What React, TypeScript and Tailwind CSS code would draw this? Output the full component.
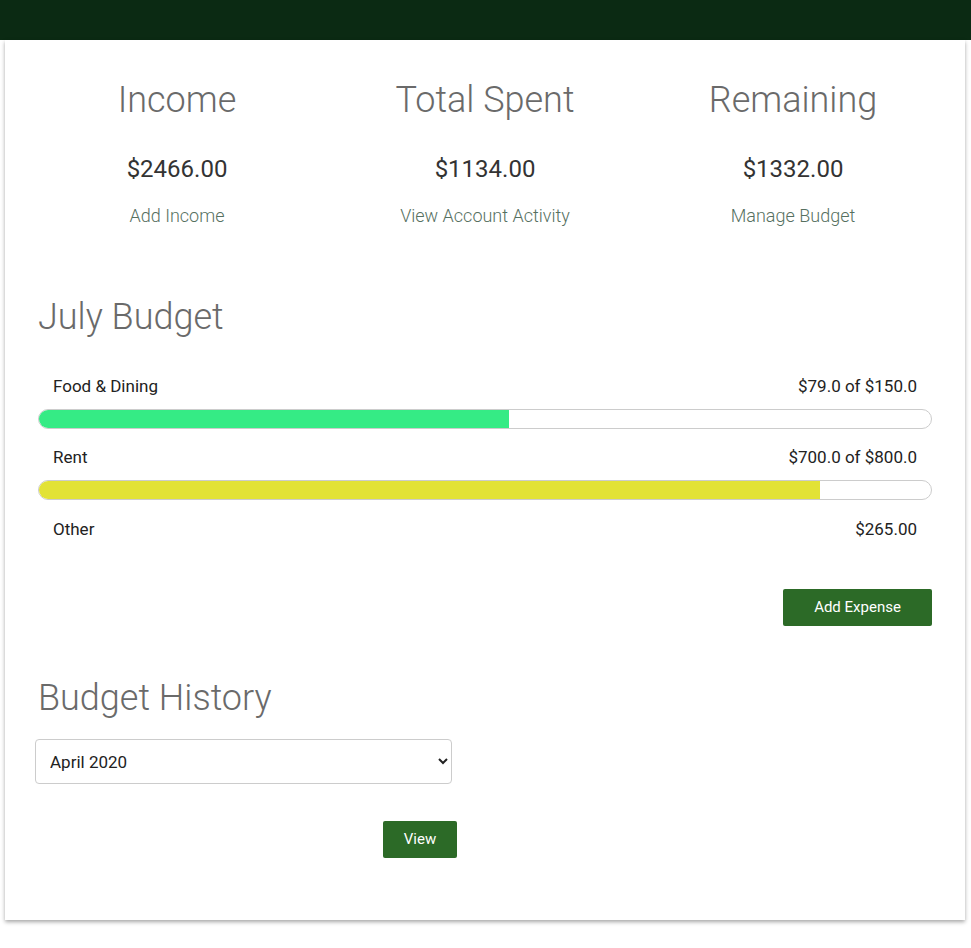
import { useState } from "react";

const categories = [
  { label: "Food & Dining", spent: 79, budget: 150, color: "bg-[#35eb85]" },
  { label: "Rent", spent: 700, budget: 800, color: "bg-[#e2e236]" },
];

const summary = [
  { title: "Income", amount: "$2466.00", link: "Add Income" },
  { title: "Total Spent", amount: "$1134.00", link: "View Account Activity" },
  { title: "Remaining", amount: "$1332.00", link: "Manage Budget" },
];

export default function App() {
  const [month, setMonth] = useState("April 2020");

  return (
    <div className="min-h-screen bg-white font-['Roboto',sans-serif]">
      <div className="h-10 bg-[#0b2a13]" />
      <div className="ml-[5px] w-[960px] bg-white shadow-[0_2px_4px_rgba(0,0,0,0.35)] px-[18px] pt-[38px] pb-[62px]">
        <div className="grid grid-cols-3">
          {summary.map((s) => (
            <div key={s.title} className="flex flex-col items-center">
              <h2 className="text-[36px] leading-[44px] font-light text-[#6a6a6a]">{s.title}</h2>
              <div className="mt-[33px] text-[24px] leading-7 text-[#333]">{s.amount}</div>
              <a href="#" className="mt-[21px] text-[18px] leading-6 font-light text-[#56705f]">
                {s.link}
              </a>
            </div>
          ))}
        </div>

        <div className="px-[15px]">
          <h2 className="mt-[67px] text-[36px] leading-[44px] font-light text-[#6a6a6a]">July Budget</h2>

          <div className="mt-[35px] flex flex-col">
            {categories.map((c) => (
              <div key={c.label} className="mb-[16px]">
                <div className="flex justify-between px-[15px] text-[17px] leading-6 text-[#222]">
                  <span>{c.label}</span>
                  <span>
                    ${c.spent.toFixed(1)} of ${c.budget.toFixed(1)}
                  </span>
                </div>
                <div className="mt-[11px] h-5 rounded-full border border-[#ccc] overflow-hidden">
                  <div
                    className={`h-full ${c.color}`}
                    style={{ width: `${(c.spent / c.budget) * 100}%` }}
                  />
                </div>
              </div>
            ))}
            <div className="mt-[1px] flex justify-between px-[15px] text-[17px] leading-6 text-[#222]">
              <span>Other</span>
              <span>$265.00</span>
            </div>
          </div>

          <div className="mt-[48px] flex justify-end">
            <button className="h-[37px] w-[149px] rounded-[2px] bg-[#2c6a27] text-[15px] text-white">
              Add Expense
            </button>
          </div>

          <h2 className="mt-[50px] text-[36px] leading-[44px] font-light text-[#6a6a6a]">Budget History</h2>

          <select
            value={month}
            onChange={(e) => setMonth(e.target.value)}
            className="mt-[19px] -ml-[3px] h-[45px] w-[417px] rounded-[4px] border border-[#ccc] bg-white px-[10px] text-[17px] text-[#222]"
          >
            <option>April 2020</option>
            <option>May 2020</option>
            <option>June 2020</option>
          </select>

          <div className="mt-[37px] flex">
            <button className="ml-[345px] h-[37px] w-[74px] rounded-[2px] bg-[#2c6a27] text-[15px] text-white">
              View
            </button>
          </div>
        </div>
      </div>
    </div>
  );
}
